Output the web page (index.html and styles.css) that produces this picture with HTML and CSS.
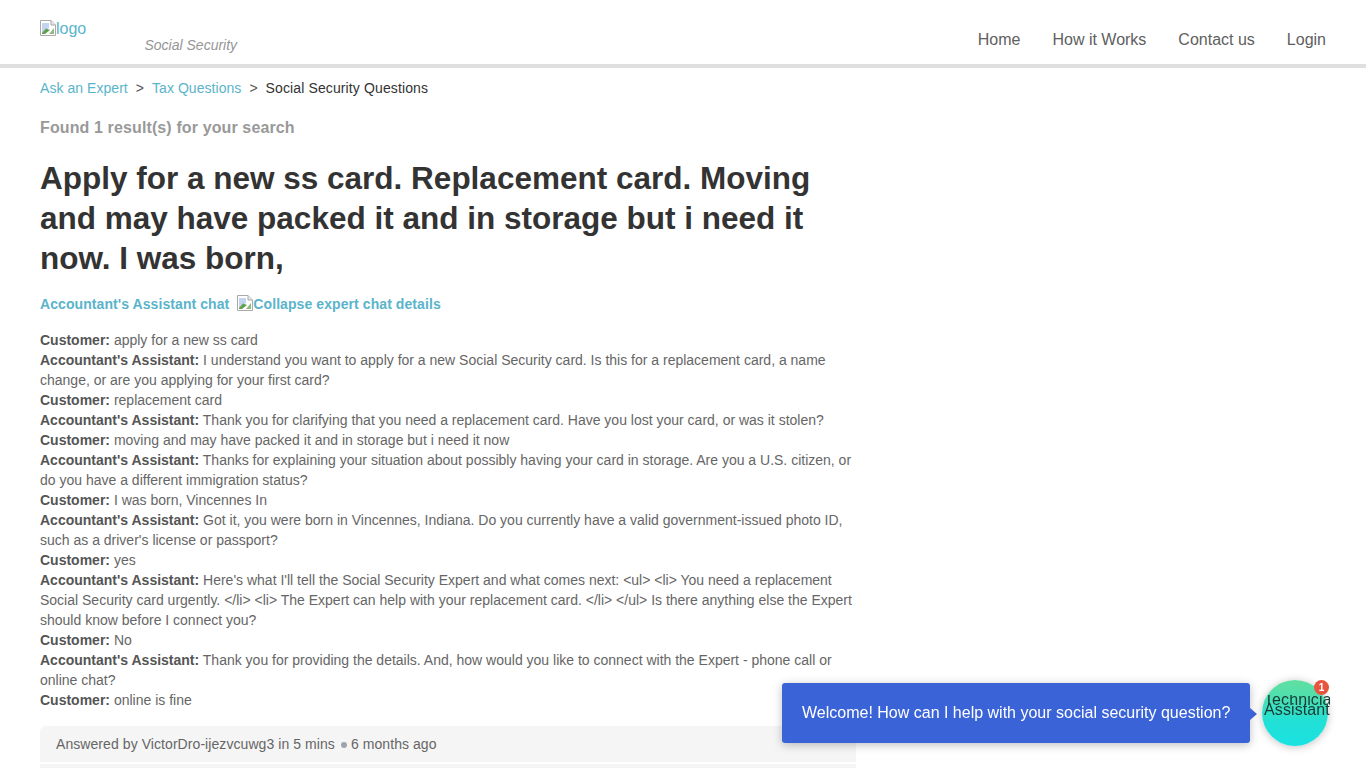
FILE: index.html
```html
<!DOCTYPE html>
<html lang="en">
<head>
<meta charset="utf-8">
<title>Social Security Questions</title>
<link rel="stylesheet" href="styles.css">
</head>
<body>
<header class="site-header">
  <div class="brand">
    <a class="logo" href="#"><svg class="broken" viewBox="0 0 16 16" width="16" height="16"><path d="M0.5 0.5H11L15.5 5V15.5H0.5Z" fill="#fff" stroke="#a9a9a9"/><path d="M11 0.5V5H15.5" fill="#e8e8e8" stroke="#a9a9a9"/><path d="M2 3H9V8L2 13Z" fill="#c3d4f0"/><path d="M2 13L6 8.5L10 10L5 14H2Z" fill="#5fa04e"/><path d="M9 14L14 8V14Z" fill="#8fb97f"/></svg>logo</a>
    <span class="tagline">Social Security</span>
  </div>
  <nav class="nav">
    <a href="#">Home</a>
    <a href="#">How it Works</a>
    <a href="#">Contact us</a>
    <a href="#">Login</a>
  </nav>
</header>
<main class="content">
  <ol class="crumbs">
    <li><a href="#">Ask an Expert</a></li>
    <li class="sep">&gt;</li>
    <li><a href="#">Tax Questions</a></li>
    <li class="sep">&gt;</li>
    <li class="current">Social Security Questions</li>
  </ol>
  <p class="found">Found 1 result(s) for your search</p>
  <h1 class="title">Apply for a new ss card. Replacement card. Moving and may have packed it and in storage but i need it now. I was born,</h1>
  <div class="chat-toggle">
    <a href="#">Accountant's Assistant chat</a>
    <a href="#"><svg class="broken" viewBox="0 0 16 16" width="16" height="16"><path d="M0.5 0.5H11L15.5 5V15.5H0.5Z" fill="#fff" stroke="#a9a9a9"/><path d="M11 0.5V5H15.5" fill="#e8e8e8" stroke="#a9a9a9"/><path d="M2 3H9V8L2 13Z" fill="#c3d4f0"/><path d="M2 13L6 8.5L10 10L5 14H2Z" fill="#5fa04e"/><path d="M9 14L14 8V14Z" fill="#8fb97f"/></svg>Collapse expert chat details</a>
  </div>
  <div class="transcript">
    <p><b>Customer:</b> apply for a new ss card</p>
    <p><b>Accountant's Assistant:</b> I understand you want to apply for a new Social Security card. Is this for a replacement card, a name change, or are you applying for your first card?</p>
    <p><b>Customer:</b> replacement card</p>
    <p><b>Accountant's Assistant:</b> Thank you for clarifying that you need a replacement card. Have you lost your card, or was it stolen?</p>
    <p><b>Customer:</b> moving and may have packed it and in storage but i need it now</p>
    <p><b>Accountant's Assistant:</b> Thanks for explaining your situation about possibly having your card in storage. Are you a U.S. citizen, or do you have a different immigration status?</p>
    <p><b>Customer:</b> I was born, Vincennes In</p>
    <p><b>Accountant's Assistant:</b> Got it, you were born in Vincennes, Indiana. Do you currently have a valid government-issued photo ID, such as a driver's license or passport?</p>
    <p><b>Customer:</b> yes</p>
    <p><b>Accountant's Assistant:</b> Here's what I'll tell the Social Security Expert and what comes next: &lt;ul&gt; &lt;li&gt; You need a replacement Social Security card urgently. &lt;/li&gt; &lt;li&gt; The Expert can help with your replacement card. &lt;/li&gt; &lt;/ul&gt; Is there anything else the Expert should know before I connect you?</p>
    <p><b>Customer:</b> No</p>
    <p><b>Accountant's Assistant:</b> Thank you for providing the details. And, how would you like to connect with the Expert - phone call or online chat?</p>
    <p><b>Customer:</b> online is fine</p>
  </div>
  <div class="answered">Answered by VictorDro-ijezvcuwg3 in 5 mins<span class="dot"></span>6 months ago</div>
  <div class="next-card"></div>
</main>
<aside class="widget">
  <div class="bubble">Welcome! How can I help with your social security question?</div>
  <div class="avatar">
    <span class="avatar-text">Technician Assistant</span>
    <span class="badge">1</span>
  </div>
</aside>
</body>
</html>
```
FILE: styles.css
```css
html, body {
  margin: 0;
  padding: 0;
  height: 768px;
  overflow: hidden;
  background: #fff;
  font-family: "Liberation Sans", Arial, sans-serif;
}
a { text-decoration: none; }
.site-header {
  height: 64px;
  border-bottom: 4px solid #dfdfdf;
  display: flex;
  justify-content: space-between;
  padding: 0 40px;
}
.brand { position: relative; width: 200px; }
.logo {
  display: inline-flex;
  align-items: flex-start;
  margin-top: 20px;
  font-size: 16px;
  line-height: 18px;
  color: #5ab4ca;
}
.broken { flex: none; display: inline-block; vertical-align: top; }
.tagline {
  position: absolute;
  left: 104.5px;
  top: 37px;
  font-size: 14px;
  line-height: 16px;
  font-style: italic;
  color: #969696;
}
.nav {
  display: flex;
  gap: 32px;
  padding-top: 31px;
  font-size: 16px;
  line-height: 18px;
}
.nav a { color: #606060; }
.content { padding: 0 40px; width: 816px; }
.crumbs {
  list-style: none;
  margin: 0;
  padding: 12px 0 0;
  display: flex;
  font-size: 14px;
  line-height: 16px;
}
.crumbs a { color: #5ab4ca; letter-spacing: 0.05px; }
.sep { margin: 0 8px; color: #555; }
.current { color: #333; letter-spacing: 0.12px; }
.found {
  margin: 23px 0 0;
  font-size: 16px;
  line-height: 18px;
  font-weight: 700;
  letter-spacing: 0.12px;
  color: #999;
}
.title {
  margin: 21px 0 0;
  font-size: 31.5px;
  line-height: 40px;
  font-weight: 700;
  color: #333;
}
.chat-toggle {
  margin-top: 17px;
  display: flex;
  gap: 8px;
  font-size: 14px;
  line-height: 18px;
  font-weight: 700;
  letter-spacing: 0.08px;
}
.chat-toggle a { color: #5ab4ca; }
.transcript {
  margin-top: 17px;
  font-size: 14px;
  line-height: 20px;
  color: #666;
}
.transcript p { margin: 0; }
.transcript b { color: #555; }
.answered {
  margin-top: 16px;
  height: 36px;
  box-sizing: border-box;
  padding: 8px 16px;
  background: #f5f5f5;
  border-radius: 6px 6px 0 0;
  font-size: 14px;
  line-height: 20px;
  letter-spacing: 0.07px;
  color: #666;
}
.dot {
  display: inline-block;
  width: 6px;
  height: 6px;
  margin: 0 4px 0 6px;
  border-radius: 50%;
  background: #a2a2ae;
  vertical-align: 1px;
}
.next-card {
  margin-top: 2px;
  height: 40px;
  background: #f5f5f5;
}
.widget {
  position: fixed;
  left: 782px;
  top: 680px;
  display: flex;
  align-items: center;
  gap: 12px;
}
.bubble {
  position: relative;
  width: 468px;
  height: 60px;
  box-sizing: border-box;
  padding: 0 20px;
  display: flex;
  align-items: center;
  white-space: nowrap;
  background: #3b63d8;
  border-radius: 3px;
  box-shadow: 0 2px 10px rgba(0, 0, 0, 0.25);
  color: #fff;
  font-size: 16px;
}
.bubble::after {
  content: "";
  position: absolute;
  right: -7px;
  top: 25px;
  border-left: 7px solid #3b63d8;
  border-top: 6px solid transparent;
  border-bottom: 6px solid transparent;
}
.avatar {
  position: relative;
  width: 66px;
  height: 66px;
  border-radius: 50%;
  background: linear-gradient(180deg, #61dfa0 0%, #4fdfae 25%, #22e0d6 62%, #1ae2e2 100%);
  box-shadow: 0 1px 8px rgba(0, 0, 0, 0.25);
  display: flex;
  align-items: flex-start;
  justify-content: flex-start;
  text-align: center;
}
.avatar-text {
  flex: none;
  width: 66px;
  margin: 15px 0 0 2px;
  overflow: hidden;
  font-size: 16px;
  line-height: 10px;
  letter-spacing: 0.1px;
  color: #163a35;
}
.badge {
  position: absolute;
  right: -1px;
  top: 0;
  width: 15px;
  height: 15px;
  border-radius: 50%;
  background: #e8553f;
  color: #fff;
  font-size: 10px;
  line-height: 15px;
  font-weight: 700;
  text-align: center;
}
```
